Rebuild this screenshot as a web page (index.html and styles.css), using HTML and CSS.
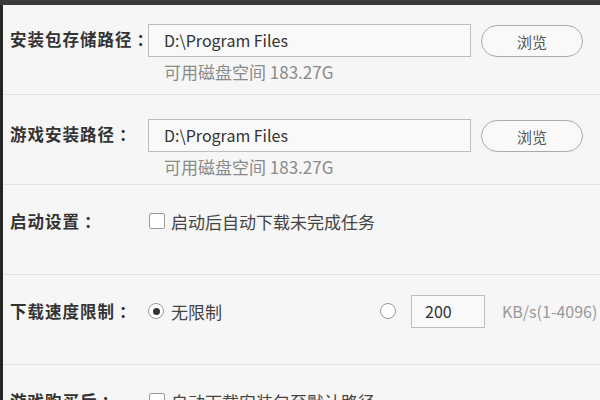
FILE: index.html
```html
<!DOCTYPE html>
<html lang="zh-CN">
<head>
<meta charset="utf-8">
<link rel="stylesheet" href="styles.css">
</head>
<body>
<div class="topbar"></div>
<div class="panel">
  <section class="sec sec-first">
    <div class="label">安装包存储路径<span class="colon">：</span></div>
    <div class="content">
      <div class="pathrow">
        <div class="input path">D:\Program Files</div>
        <button class="btn">浏览</button>
      </div>
      <div class="hint">可用磁盘空间 183.27G</div>
    </div>
  </section>
  <section class="sec sec-path">
    <div class="label">游戏安装路径<span class="colon">：</span></div>
    <div class="content">
      <div class="pathrow">
        <div class="input path">D:\Program Files</div>
        <button class="btn">浏览</button>
      </div>
      <div class="hint">可用磁盘空间 183.27G</div>
    </div>
  </section>
  <section class="sec sec-opt">
    <div class="label">启动设置<span class="colon">：</span></div>
    <div class="content">
      <div class="optrow">
        <span class="check"></span>
        <span class="opttext">启动后自动下载未完成任务</span>
      </div>
    </div>
  </section>
  <section class="sec sec-opt">
    <div class="label">下载速度限制<span class="colon">：</span></div>
    <div class="content">
      <div class="optrow">
        <div class="radiogroup first">
          <span class="radio checked"></span>
          <span class="opttext">无限制</span>
        </div>
        <div class="radiogroup">
          <span class="radio"></span>
          <div class="input speed">200</div>
          <span class="unit">KB/s(1-4096)</span>
        </div>
      </div>
    </div>
  </section>
  <section class="sec sec-opt">
    <div class="label">游戏购买后<span class="colon">：</span></div>
    <div class="content">
      <div class="optrow">
        <span class="check"></span>
        <span class="opttext">自动下载安装包至默认路径</span>
      </div>
    </div>
  </section>
</div>
</body>
</html>
```

FILE: styles.css
```css
* { box-sizing: border-box; }
html, body {
  margin: 0;
  padding: 0;
  width: 600px;
  height: 400px;
  overflow: hidden;
  background: #f6f6f6;
  font-family: "Noto Sans CJK SC", "Noto Sans", sans-serif;
}
.topbar {
  height: 5px;
  background: #3a3a3a;
}
.panel {
  border-left: 3px solid #262626;
  height: 395px;
}
.sec {
  display: flex;
  align-items: flex-start;
  height: 90px;
  border-bottom: 1px solid #e3e3e3;
  padding-left: 7px;
}
.sec-first { padding-top: 18px; }
.sec-path { padding-top: 23px; }
.sec-opt { padding-top: 19px; }
.label {
  width: 138px;
  flex: none;
  font-size: 16.5px;
  font-weight: bold;
  color: #333;
  line-height: 33px;
  letter-spacing: 1px;
  white-space: nowrap;
}
.colon {
  padding-left: 4px;
  letter-spacing: 0;
}
.sec-opt .label { line-height: 34px; }
.content { flex: 1; }
.pathrow {
  display: flex;
  align-items: center;
  gap: 10px;
}
.input {
  height: 33px;
  border: 1px solid #bdbdbd;
  background: #f9f9f9;
  color: #333;
  font-size: 16px;
  line-height: 31px;
}
.path {
  width: 323px;
  padding-left: 15px;
}
.btn {
  width: 102px;
  height: 32px;
  margin-top: 2px;
  border: 1px solid #ababab;
  border-radius: 16px;
  background: #f9f9f9;
  color: #555;
  font-family: inherit;
  font-size: 15px;
  padding: 0;
}
.hint {
  margin-top: 4px;
  padding-left: 16px;
  font-size: 17px;
  line-height: 22px;
  color: #8a8a8a;
}
.optrow {
  display: flex;
  align-items: center;
  height: 34px;
}
.check {
  width: 16px;
  height: 16px;
  border: 1px solid #9a9a9a;
  border-radius: 2px;
  background: #fff;
  margin-left: 1px;
  margin-right: 6px;
  flex: none;
}
.opttext {
  font-size: 17px;
  color: #444;
}
.radiogroup {
  display: flex;
  align-items: center;
}
.radiogroup.first { width: 232px; }
.radio {
  width: 16px;
  height: 16px;
  border: 1px solid #999;
  border-radius: 50%;
  background: #fff;
  flex: none;
  display: flex;
  align-items: center;
  justify-content: center;
  margin-right: 7px;
}
.radio.checked::after {
  content: "";
  width: 7px;
  height: 7px;
  border-radius: 50%;
  background: #333;
}
.radiogroup .radio + .input { margin-left: 8px; }
.speed {
  width: 74px;
  padding-left: 13px;
}
.unit {
  margin-left: 17px;
  font-size: 16px;
  color: #999;
  white-space: nowrap;
}
```
